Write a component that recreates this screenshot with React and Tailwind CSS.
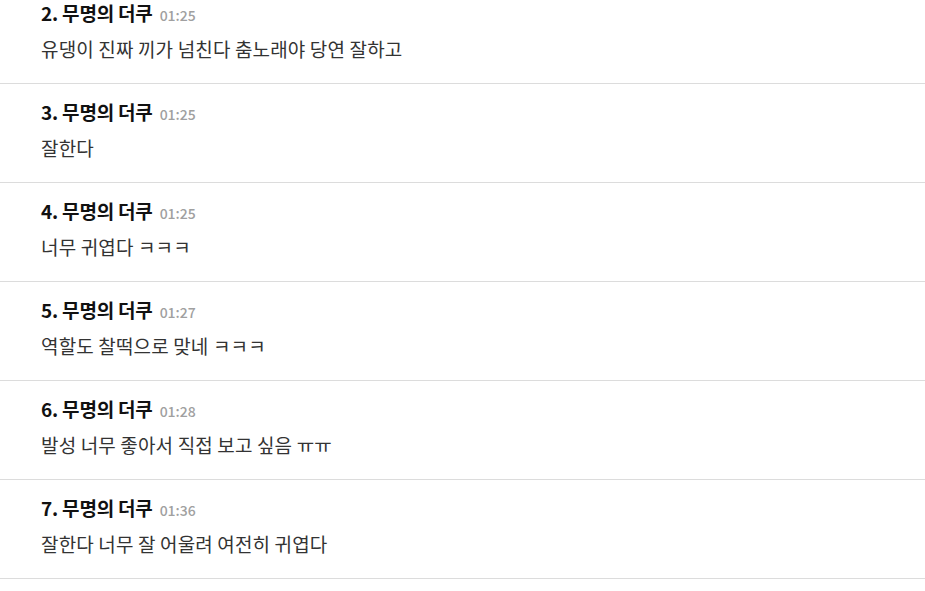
import React from 'react';

const comments = [
  { n: 2, time: '01:25', text: '유댕이 진짜 끼가 넘친다 춤노래야 당연 잘하고' },
  { n: 3, time: '01:25', text: '잘한다' },
  { n: 4, time: '01:25', text: '너무 귀엽다 ㅋㅋㅋ' },
  { n: 5, time: '01:27', text: '역할도 찰떡으로 맞네 ㅋㅋㅋ' },
  { n: 6, time: '01:28', text: '발성 너무 좋아서 직접 보고 싶음 ㅠㅠ' },
  { n: 7, time: '01:36', text: '잘한다 너무 잘 어울려 여전히 귀엽다' },
];

export default function App() {
  return (
    <div className="w-[925px] h-[591px] bg-white overflow-hidden" style={{ fontFamily: '"Noto Sans CJK KR", "Noto Sans", sans-serif' }}>
      <ul>
        {comments.map((c, i) => (
          <li
            key={c.n}
            className={`pl-[41px] pb-[22px] border-b border-[#dcdcdc] ${i === 0 ? 'pt-px' : 'pt-[16px]'}`}
          >
            <div className="flex items-baseline h-[24px] leading-[24px]">
              <span className="text-[19px] font-bold text-[#111] tracking-[-0.2px]">{c.n}. 무명의 더쿠</span>
              <span className="ml-[7px] text-[14px] font-medium text-[#a0a0a0]">{c.time}</span>
            </div>
            <p className="mt-[12px] text-[19px] leading-[24px] tracking-[0.15px] text-[#333]">{c.text}</p>
          </li>
        ))}
      </ul>
    </div>
  );
}
